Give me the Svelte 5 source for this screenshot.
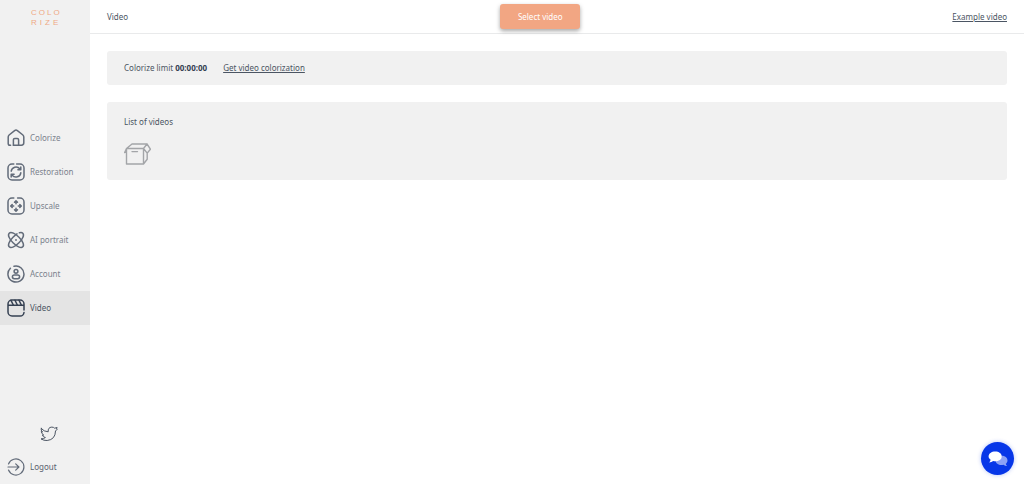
<script lang="ts">
  const items = [
    { id: 'colorize', label: 'Colorize' },
    { id: 'restoration', label: 'Restoration' },
    { id: 'upscale', label: 'Upscale' },
    { id: 'portrait', label: 'AI portrait' },
    { id: 'account', label: 'Account' },
    { id: 'video', label: 'Video' },
  ];

  let active = $state('video');
</script>

{#snippet icon(id: string)}
  <svg class="icon" viewBox="0 0 18 18" aria-hidden="true">
    {#if id === 'colorize'}
      <path d="M3.600 16.200H3A1.800 1.800 0 0 1 1.200 14.400V8Q1.200 6.800 2.100 6L7.600 1.600Q9 .6 10.400 1.600L15.900 6Q16.800 6.800 16.800 8v5.800a2.400 2.400 0 0 1-2.400 2.400H6.400" />
      <path d="M6.400 16.200v-5.400q0-1.400 1.400-1.400h2.400q1.400 0 1.400 1.400v5.400" />
    {:else if id === 'restoration'}
      <path d="M6.800 1H5A4 4 0 0 0 1 5v8a4 4 0 0 0 4 4h8a4 4 0 0 0 4-4V5a4 4 0 0 0-4-4H9.600" />
      <path d="M4.200 8.200a4.900 4.900 0 0 1 8.600-2.500l1 1.100M13.800 3.900v2.900h-2.900M13.800 9.800a4.900 4.900 0 0 1-8.600 2.500l-1-1.100M4.200 14.100v-2.900h2.900" />
    {:else if id === 'upscale'}
      <path d="M6.800 1H5A4 4 0 0 0 1 5v8a4 4 0 0 0 4 4h8a4 4 0 0 0 4-4V5a4 4 0 0 0-4-4h-2.400" />
      <path d="M9 6.700V4M7.500 5.200 9 3.700l1.500 1.500M9 11.300V14M7.500 12.800 9 14.300l1.500-1.500M6.700 9H4M5.200 7.500 3.700 9l1.500 1.500M11.300 9H14M12.800 7.500 14.300 9l-1.500 1.500" />
    {:else if id === 'portrait'}
      <path d="M2.200 2.200C4 .4 8.400 2.600 12 6.200S17.600 14 15.800 15.800 9.600 15.400 6 11.800 .4 4 2.200 2.200Z" />
      <path d="M12.400 1.800q2.400-.6 3.400.4C17.600 4 15.600 8.200 12 11.800S4 17.600 2.200 15.800 2.400 9.800 6 6.200q2-2 4-3.300" />
      <circle class="dot" cx="9" cy="9" r=".9" />
    {:else if id === 'account'}
      <path d="M7 1.300a8 8 0 1 1-3.600 2M1.300 7a8 8 0 0 1 .8-2" />
      <circle cx="9" cy="6.300" r="1.900" />
      <rect x="5.400" y="9.900" width="7.200" height="3.800" rx="1.900" />
    {:else if id === 'video'}
      <path d="M1 6.200V13a4 4 0 0 0 4 4h8a4 4 0 0 0 4-3.500M17 11V5a4 4 0 0 0-4-4H5a4 4 0 0 0-4 4v1.200h16" />
      <path d="M4 1.300 6.300 6M8 1.200 10.300 6M12 1.200 14.300 6" />
    {:else if id === 'logout'}
      <path d="M1.500 6a8 8 0 1 1 0 6M1 9h10.800M8.700 5.900 11.900 9l-3.200 3.100" />
    {/if}
  </svg>
{/snippet}

<div class="page">
  <aside class="sidebar">
    <a class="logo" href="#home" aria-label="Colorize home">
      <span>COLO</span>
      <span class="second">RIZE</span>
    </a>

    <nav>
      {#each items as item (item.id)}
        <a
          class="nav-item"
          class:active={active === item.id}
          href="#{item.id}"
          aria-current={active === item.id ? 'page' : undefined}
          onclick={() => (active = item.id)}
        >
          {@render icon(item.id)}
          {item.label}
        </a>
      {/each}
    </nav>

    <div class="bottom">
      <a class="twitter" href="#twitter" aria-label="Twitter">
        <svg viewBox="0 0 18 16" aria-hidden="true">
          <path d="M1.200 2.500Q4 5.700 8.200 5.800 7.800 1.300 11.800 1.100q1.900 0 2.800 1.100l2.500-.7-.6 1.500.7.300-1.700 1.700Q15.300 13.600 7.200 14.500 3.700 14.700 1 12.900q2.900 0 4.400-1.400Q3 11.100 2.400 9.100l1.300-.1Q1.500 7.900 1.300 5.500l1.200.5Q.4 4 1.200 2.500Z" />
        </svg>
      </a>
      <button class="nav-item logout" type="button">
        {@render icon('logout')}
        Logout
      </button>
    </div>
  </aside>

  <div class="content">
    <header>
      <h1>Video</h1>
      <button class="select" type="button">Select video</button>
      <a class="link" href="#example">Example video</a>
    </header>

    <main>
      <section class="card limit">
        <span>Colorize limit <b>00:00:00</b></span>
        <a class="link" href="#buy">Get video colorization</a>
      </section>

      <section class="card">
        <h2>List of videos</h2>
        <svg class="empty" viewBox="0 0 27 22" aria-hidden="true">
          <path d="M2.500 5.500h17v15.500h-17ZM2.500 5.500 8 1h15l-3.500 4.500M2.500 5.500.6 9.500l1.900-.6M23 1l3.400 5.200-3.200 3.900-3.700-4.600M23.200 10.100v6.200L19.500 21M8 8.600h5.500" />
        </svg>
      </section>
    </main>
  </div>

  <button class="chat" type="button" aria-label="Open chat">
    <svg viewBox="0 0 20 16" aria-hidden="true">
      <path class="back" d="M13.500 4.800c3.500 0 6 2 6 4.600 0 1.400-.7 2.500-1.700 3.300q.2 1.300 1.400 2.400-2.200.1-3.700-1.300c-4 1-7.700-.9-7.900-4 3.600-.2 6-2.200 5.900-5Z" />
      <path class="front" d="M7.200.5c3.700 0 6.600 2.100 6.600 4.900s-2.900 4.900-6.600 4.900q-1 0-2-.3-1.600 1.400-4 1.400 1.300-1.300 1.400-2.700C1.400 7.800.6 6.700.6 5.400.6 2.600 3.500.5 7.200.5Z" />
    </svg>
  </button>
</div>

<style>
  :global(body) {
    margin: 0;
  }
  .page {
    display: flex;
    min-height: 100vh;
    background: #fff;
    color: #4b5563;
    font: 8px/12px 'Noto Sans', 'Open Sans', sans-serif;
  }
  a {
    color: inherit;
    text-decoration: none;
  }
  button {
    border: 0;
    font: inherit;
    cursor: pointer;
  }
  h1,
  h2 {
    margin: 0;
    font-size: inherit;
    font-weight: 400;
  }
  svg {
    display: block;
    fill: none;
    stroke: currentColor;
    stroke-linecap: round;
    stroke-linejoin: round;
  }
  .sidebar {
    display: flex;
    flex: none;
    flex-direction: column;
    justify-content: space-between;
    box-sizing: border-box;
    width: 90px;
    padding-top: 8px;
    background: #f1f1f1;
  }
  .logo {
    display: flex;
    flex-direction: column;
    width: 28px;
    margin: 0 auto;
    color: #efa985;
    font: 8px/10px 'Liberation Sans', sans-serif;
  }
  .logo span {
    letter-spacing: 2px;
  }
  .logo .second {
    letter-spacing: 3px;
  }
  .nav-item {
    display: flex;
    align-items: center;
    gap: 5px;
    box-sizing: border-box;
    width: 100%;
    height: 34px;
    padding: 0 7px;
    color: #7b828d;
  }
  .nav-item.active {
    background: #e4e4e4;
    color: #4b5563;
  }
  .icon {
    flex: none;
    width: 18px;
    height: 18px;
    color: #626b79;
    stroke-width: 1.5;
  }
  .active .icon {
    color: #354052;
  }
  .icon .dot {
    fill: currentColor;
    stroke: none;
  }
  .logout {
    background: none;
    color: #59616e;
    text-align: left;
  }
  .logout .icon {
    stroke-width: 1.2;
  }
  .twitter {
    display: flex;
    justify-content: center;
    padding: 8px;
  }
  .twitter svg {
    width: 18px;
    height: 16px;
    margin-left: 8px;
  }
  .content {
    flex: 1;
    min-width: 0;
  }
  header {
    display: flex;
    align-items: center;
    justify-content: space-between;
    height: 33px;
    padding: 0 17px;
    border-bottom: 1px solid #e9eaeb;
  }
  .link {
    text-decoration: underline;
  }
  .select {
    width: 80px;
    height: 25px;
    padding: 0;
    border-radius: 3px;
    background: #f2a683;
    box-shadow: 0 2px 4px rgb(0 0 0 / 35%);
    color: #fff;
  }
  main {
    display: grid;
    gap: 17px;
    padding: 17px;
  }
  .card {
    padding: 11px 17px;
    border-radius: 3px;
    background: #f1f1f1;
  }
  .card h2 {
    margin: 3px 0 15px;
  }
  .limit {
    display: flex;
    gap: 16px;
  }
  .limit b {
    color: #354052;
  }
  .empty {
    width: 27px;
    height: 22px;
    margin-bottom: 4px;
    color: #a3a5a8;
    stroke-width: 1.4;
  }
  .chat {
    position: fixed;
    right: 10px;
    bottom: 9px;
    display: grid;
    place-items: center;
    width: 33px;
    height: 33px;
    padding: 0;
    border-radius: 50%;
    background: #0737e8;
    box-shadow: 0 0 4px rgb(11 59 232 / 30%);
  }
  .chat svg {
    width: 20px;
    height: 16px;
    stroke: none;
  }
  .chat .back {
    fill: #8da2f5;
  }
  .chat .front {
    fill: #fff;
  }
</style>
